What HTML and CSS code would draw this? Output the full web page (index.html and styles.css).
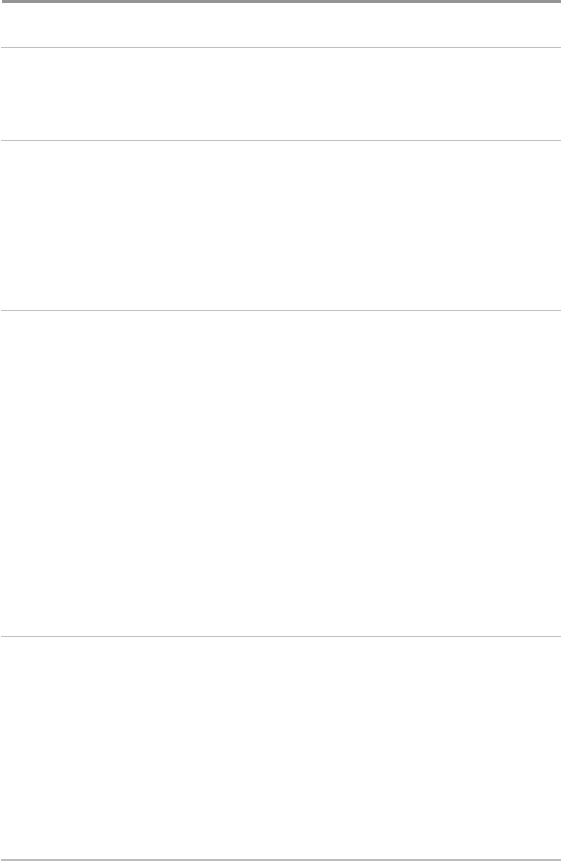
FILE: index.html
```html
<!DOCTYPE html>
<html>
<head>
<meta charset="utf-8">
<link rel="stylesheet" href="styles.css">
</head>
<body>
<div class="page">
  <div class="topbar"></div>
  <div class="section s1"></div>
  <div class="section s2"></div>
  <div class="section s3"></div>
  <div class="section s4"></div>
  <div class="section s5"></div>
</div>
</body>
</html>
```
FILE: styles.css
```css
html, body {
  margin: 0;
  padding: 0;
  background: #ffffff;
  font-family: "Liberation Sans", Arial, sans-serif;
}
.page {
  display: flex;
  flex-direction: column;
  padding-left: 1px;
}
.topbar {
  height: 3px;
  margin-left: 1px;
  background: #959595;
}
.section {
  border-bottom: 1px solid #c0c0c0;
}
.s1 { height: 44px; }
.s2 { height: 92px; }
.s3 { height: 169px; }
.s4 { height: 325px; }
.s5 { height: 222px; border-bottom-width: 2px; border-bottom-color: #bdbdbd; }
```
